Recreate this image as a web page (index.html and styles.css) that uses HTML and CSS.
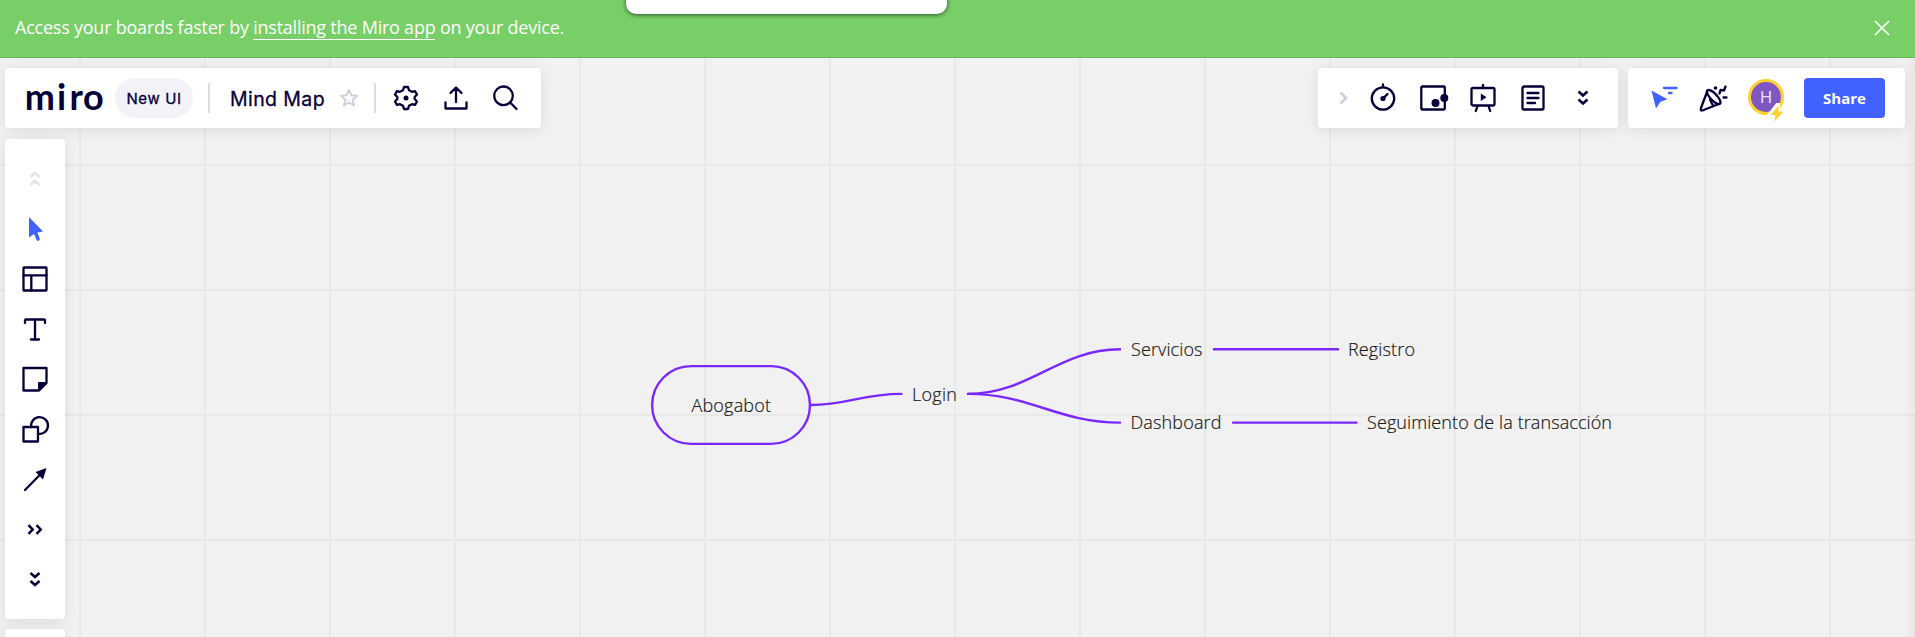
FILE: index.html
```html
<!DOCTYPE html>
<html lang="en">
<head>
<meta charset="utf-8">
<title>Mind Map</title>
<link rel="stylesheet" href="styles.css">
</head>
<body>
<div class="app">
  <header class="banner">
    <p class="banner-text">Access your boards faster by <a class="banner-link">installing the Miro app</a> on your device.</p>
    <svg class="banner-close" width="16" height="16" viewBox="0 0 16 16"><path d="M1 1L15 15M15 1L1 15" stroke="#fff" stroke-width="1.7" fill="none"/></svg>
    <div class="popup"></div>
  </header>

  <main class="board">
    <svg class="mindmap" width="1915" height="579" viewBox="0 58 1915 579">
      <g class="branch">
        <rect x="652.1" y="366.1" width="157.9" height="77.8" rx="38.9"/>
        <path d="M811 405C848 405 861 393.9 901.500 393.9"/>
        <path d="M968 393.9C1030 393.9 1058 349.3 1120 349.3"/>
        <path d="M968 393.9C1030 393.9 1058 422.6 1120 422.6"/>
        <path d="M1214 349.3H1338"/>
        <path d="M1233 422.6H1356.500"/>
      </g>
      <g class="node">
        <text x="691.500" y="412" textLength="79.500">Abogabot</text>
        <text x="912" y="401" textLength="45">Login</text>
        <text x="1131" y="356" textLength="71.500">Servicios</text>
        <text x="1130.500" y="429" textLength="91">Dashboard</text>
        <text x="1348" y="356" textLength="67">Registro</text>
        <text x="1367" y="429" textLength="245">Seguimiento de la transacción</text>
      </g>
    </svg>

    <div class="topbar">
      <div class="panel title-panel">
        <svg class="logo" width="84" height="58" viewBox="0 0 84 58"><text x=".8 33 45.500 59" y="40.500">miro</text></svg>
        <span class="chip">New UI</span>
        <i class="divider"></i>
        <span class="board-name">Mind Map</span>
        <svg class="star" width="20" height="20" viewBox="0 0 20 20"><path d="M10 2L12.300 7.200L18 7.800L13.800 11.700L15 17.400L10 14.500L5 17.400L6.200 11.700L2 7.800L7.700 7.200Z" fill="none" stroke="#d0cfda" stroke-width="2" stroke-linejoin="round"/></svg>
        <i class="divider second"></i>
        <span class="tool"><svg class="ico" viewBox="0 0 28 28"><path d="M12 3H16L17 6.200L20 7.800L23 7.100L25 10.500L22.700 13V15L25 17.500L23 20.900L20 20.200L17 21.800L16 25H12L11 21.800L8 20.200L5 20.900L3 17.500L5.300 15V13L3 10.500L5 7.100L8 7.800L11 6.200Z"/><circle class="solid" cx="14" cy="14" r="2.500"/></svg></span>
        <span class="tool"><svg class="ico" viewBox="0 0 28 28"><path d="M14 18V4M8.500 9L14 3.500L19.500 9M3.500 18.500V24.500H24.500V18.500"/></svg></span>
        <span class="tool"><svg class="ico" viewBox="0 0 28 28"><circle cx="11.500" cy="11.800" r="9.300"/><path d="M18.200 18.500L24.500 25"/></svg></span>
      </div>

      <div class="right-panels">
        <div class="panel tools-panel">
          <span class="tool narrow"><svg class="ico faint" viewBox="0 0 28 28"><path d="M11.500 8.500L17 14L11.500 19.500"/></svg></span>
          <span class="tool"><svg class="ico" viewBox="0 0 28 28"><circle cx="14" cy="14.500" r="11.200"/><path d="M14 3V.5M14 14.500L18.500 10"/><circle class="solid" cx="14" cy="14.500" r="2.600"/></svg></span>
          <span class="tool"><svg class="ico" viewBox="0 0 28 28"><rect x="2.300" y="2.500" width="23.500" height="23" rx="1"/><circle class="solid" cx="16.500" cy="19" r="4"/><circle class="solid" cx="25.300" cy="14" r="4"/></svg></span>
          <span class="tool"><svg class="ico" viewBox="0 0 28 28"><rect x="2.500" y="4" width="23" height="17.500" rx="1.500"/><path d="M14 4V1M8.500 22L6.800 27M19.500 22L21.200 27"/><path class="solid" d="M11.800 9.500V17L17.500 13.200Z"/></svg></span>
          <span class="tool"><svg class="ico" viewBox="0 0 28 28"><rect x="3.500" y="2.500" width="21" height="23" rx="1.500"/><path d="M8.500 9H19.500M8.500 14H19.500M8.500 19H16"/></svg></span>
          <span class="tool"><svg class="ico" viewBox="0 0 28 28"><path class="chev" d="M9.500 7.500L14 11.500L18.500 7.500M9.500 15.500L14 19.500L18.500 15.500"/></svg></span>
        </div>
        <div class="panel share-panel">
          <span class="tool cursors"><svg class="ico blue" viewBox="0 0 28 28"><path class="solid" d="M1.500 6.500L17.500 15.300L10.500 17.700L6 24.500Z"/><path d="M14 4H26.500M19 9H21.500"/></svg></span>
          <span class="tool party"><svg class="ico" viewBox="0 0 28 28"><path d="M9.500 6.500L3 24Q2 27.500 5 26.200L22 19.500"/><ellipse cx="15.700" cy="13" rx="3.400" ry="9.200" transform="rotate(-43 15.700 13)"/><path d="M12 15.500L15 21.500"/><path d="M21.500 9.500L22.500 6L26 6.500L27.500 2.500M25.500 13.500H28.500"/><circle class="solid" cx="17.500" cy="4" r="1.800"/></svg></span>
          <span class="avatar">H
            <svg class="bolt" width="18" height="20" viewBox="0 0 18 20"><path d="M11 1L2.500 12H7.500L6.500 19L16 8.500H11Z" stroke="#fff" stroke-width="4" fill="#fff"/><path d="M11.500 2.500L3.500 12H8.300L7.500 18.500L16.500 8.500H11.500Z" fill="#ffd02f"/></svg>
          </span>
          <button class="share">Share</button>
        </div>
      </div>
    </div>

    <nav class="panel sidebar">
      <span class="tool"><svg class="ico ghost" viewBox="0 0 28 28"><path class="chev" d="M9.500 12L14 8L18.500 12M9.500 20L14 16L18.500 20"/></svg></span>
      <span class="tool"><svg class="ico blue" viewBox="0 0 28 28"><path class="solid" d="M8 2L22 16.500L15 17.700L8 22.500Z"/><path class="stem" d="M14.300 17L17 24"/></svg></span>
      <span class="tool"><svg class="ico" viewBox="0 0 28 28"><rect x="2.500" y="2.500" width="23" height="23" rx=".5"/><path d="M2.500 10.300H25.500M10.300 10.300V25.500"/></svg></span>
      <span class="tool"><svg class="ico" viewBox="0 0 28 28"><path d="M4 8V5.500Q4 4.500 5 4.500H23Q24 4.500 24 5.500V8M14 4.500V24.500M10 24.500H18"/></svg></span>
      <span class="tool"><svg class="ico" viewBox="0 0 28 28"><path d="M2.500 3H25.500V18L18 25.500H2.500Z"/><path class="solid" d="M25.500 17H18Q17 17 17 18V25.500H18L25.500 18Z"/></svg></span>
      <span class="tool"><svg class="ico" viewBox="0 0 28 28"><rect x="2.500" y="12" width="14.500" height="14.500"/><path d="M10.300 12A8.400 8.400 0 1 1 17 18.800"/></svg></span>
      <span class="tool"><svg class="ico" viewBox="0 0 28 28"><path d="M4 25L19 9.800"/><path class="solid" d="M25.500 3L22 14.500L14.500 7Z"/></svg></span>
      <span class="tool"><svg class="ico" viewBox="0 0 28 28"><path class="chev" d="M7.500 10.200L11.700 14.500L7.500 18.800M15.500 10.200L19.700 14.500L15.500 18.800"/></svg></span>
      <span class="tool"><svg class="ico" viewBox="0 0 28 28"><path class="chev" d="M9.500 8L14 12L18.500 8M9.500 16L14 20L18.500 16"/></svg></span>
    </nav>
    <div class="panel sidebar-next"></div>
    <div class="edge-shade"></div>
  </main>
</div>
</body>
</html>
```
FILE: styles.css
```css
* { box-sizing: border-box; }
body { margin: 0; font-family: "Open Sans", sans-serif; color: #050038; }
.app { width: 1915px; height: 637px; overflow: hidden; display: flex; flex-direction: column; }
.banner {
  height: 58px; flex: none; position: relative;
  display: flex; align-items: center; justify-content: space-between;
  padding: 0 25px 2px 15px;
  background: #78ce67; border-bottom: 1px solid #66b956;
}
.banner-text { margin: 0; font-size: 18px; letter-spacing: -0.23px; color: #fff; line-height: 24px; padding-bottom: 1px; white-space: nowrap; }
.banner-link { border-bottom: 1px solid #fff; }
.popup {
  position: absolute; left: 626px; top: -20px; width: 321px; height: 34px;
  background: #fff; border-radius: 10px; box-shadow: 0 1px 4px rgba(0,0,0,.6);
}
.board {
  position: relative; flex: 1; padding: 10px 10px 0 5px;
  background-color: #f1f1f1;
  background-image:
    linear-gradient(90deg, #e8e8e8 2px, transparent 2px),
    linear-gradient(#e8e8e8 2px, transparent 2px);
  background-size: 125px 125px;
  background-position: 79px 0, 0 106px;
}
.mindmap { position: absolute; left: 0; top: 0; }
.branch { fill: none; stroke: #7a28ff; stroke-width: 2.4; stroke-linecap: round; }
.node { font-family: "Open Sans", sans-serif; font-weight: 300; font-size: 18px; fill: #1a1a1a; stroke: #1a1a1a; stroke-width: .2; }
.panel { background: #fff; border-radius: 4px; box-shadow: 0 2px 14px rgba(5,0,56,.09); position: relative; }
.topbar { display: flex; justify-content: space-between; height: 60px; }
.title-panel { width: 536px; display: flex; align-items: center; padding-left: 19px; }
.logo { flex: none; overflow: visible; }
.logo text { font-family: Lato, sans-serif; font-weight: 700; font-size: 36px; fill: #050038; }
.chip {
  margin-left: 7px; width: 78px; height: 40px; border-radius: 20px; background: #f3f3f7;
  display: flex; align-items: center; justify-content: center;
  font: 400 15px Inter, sans-serif; letter-spacing: .6px; padding-top: 1px;
  -webkit-text-stroke: .3px #050038;
}
.divider { width: 2px; height: 30px; background: #dedde5; margin: 0 20px 0 15px; flex: none; }
.board-name { font: 400 19.500px Inter, sans-serif; letter-spacing: .4px; width: 95px; white-space: nowrap; padding-top: 1px; -webkit-text-stroke: .3px #050038; }
.star { margin-left: 14px; flex: none; }
.second { margin: 0 5px 0 15px; }
.tool { width: 50px; height: 50px; display: flex; align-items: center; justify-content: center; flex: none; }
.ico { width: 28px; height: 28px; overflow: visible; fill: none; stroke: #050038; stroke-width: 2.3; stroke-linejoin: round; stroke-linecap: round; }
.ico .solid { fill: #050038; stroke: none; }
.ico .chev { stroke-width: 2.5; stroke-linecap: butt; stroke-linejoin: miter; }
.ico.faint { stroke: #d0cfda; stroke-width: 2.8; stroke-linecap: butt; stroke-linejoin: miter; }
.ico.ghost { stroke: #e3e2e9; }
.ico.blue { stroke: #4262ff; }
.ico.blue .solid { fill: #4262ff; }
.ico .stem { stroke-width: 3.5; }
.right-panels { display: flex; gap: 10px; }
.tools-panel { width: 300px; display: flex; align-items: center; }
.narrow { width: 40px; padding-left: 10px; }
.share-panel { width: 277px; display: flex; align-items: center; padding-left: 11px; }
.party { margin-left: -2px; }
.avatar {
  position: relative; width: 36px; height: 36px; margin: 0 20px 2px 11px; flex: none;
  border: 3px solid #ffd02f; border-radius: 50%; background: #7e57c2;
  color: #e6def3; font: 17px/30px Roboto, sans-serif; text-align: center;
}
.bolt { position: absolute; left: 16px; top: 21px; }
.share {
  width: 81px; height: 40px; border: 0; border-radius: 4px; background: #4262ff; color: #fff; padding: 0 0 1px;
  font: 700 15px "Open Sans", sans-serif;
}
.sidebar { margin-top: 11px; width: 60px; height: 480px; padding: 15px 5px; }
.sidebar-next { margin-top: 10px; width: 60px; height: 60px; }
.edge-shade {
  position: absolute; inset: 0; pointer-events: none;
  background:
    linear-gradient(transparent, rgba(0,0,0,.045)) 0 100% / 100% 36px no-repeat,
    linear-gradient(90deg, transparent, rgba(0,0,0,.04)) 100% 0 / 10px 100% no-repeat;
}
```
